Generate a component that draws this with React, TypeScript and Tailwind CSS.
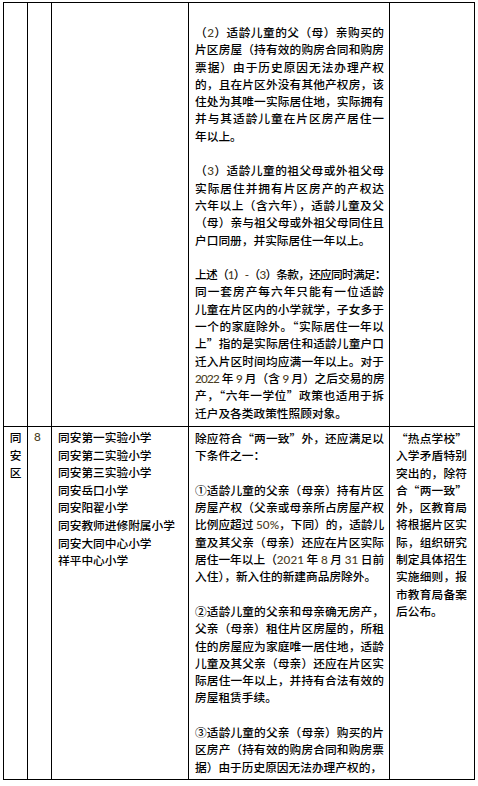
import React from "react";

const num = "font-['Lato'] text-[#4a3d24]";

// 数字用西文字体显示
function fmt(s: string) {
  return s.split(/([0-9%\-]+)/).map((part, i) =>
    /^[0-9%\-]+$/.test(part) ? (
      <span key={i} className={num}>
        {part}
      </span>
    ) : (
      <React.Fragment key={i}>{part}</React.Fragment>
    )
  );
}

// 每行单独写出，行末对齐；以 ! 开头的行字距收紧
function Lines({ rows }: { rows: string[] }) {
  return (
    <>
      {rows.map((r, i) => {
        if (r === "") return <div key={i} className="h-[17.3px]" />;
        const tight = r.startsWith("!");
        const text = tight ? r.slice(1) : r;
        const last = i === rows.length - 1 || rows[i + 1] === "";
        return (
          <div
            key={i}
            className={
              (last
                ? "h-[17.3px] leading-[17.3px] whitespace-nowrap"
                : "h-[17.3px] leading-[17.3px] whitespace-nowrap text-justify [text-align-last:justify]") +
              (tight ? " tracking-[-0.75px]" : "")
            }
          >
            {fmt(text)}
          </div>
        );
      })}
    </>
  );
}

const row1 = [
  "（2）适龄儿童的父（母）亲购买的",
  "片区房屋（持有效的购房合同和购房",
  "票据）由于历史原因无法办理产权",
  "的，且在片区外没有其他产权房，该",
  "住处为其唯一实际居住地，实际拥有",
  "并与其适龄儿童在片区房产居住一",
  "年以上。",
  "",
  "（3）适龄儿童的祖父母或外祖父母",
  "实际居住并拥有片区房产的产权达",
  "六年以上（含六年），适龄儿童及父",
  "（母）亲与祖父母或外祖父母同住且",
  "户口同册，并实际居住一年以上。",
  "",
  "!上述（1）-（3）条款，还应同时满足：",
  "同一套房产每六年只能有一位适龄",
  "儿童在片区内的小学就学，子女多于",
  "一个的家庭除外。“实际居住一年以",
  "上”指的是实际居住和适龄儿童户口",
  "迁入片区时间均应满一年以上。对于",
  "!2022 年 9 月（含 9 月）之后交易的房",
  "产，“六年一学位”政策也适用于拆",
  "迁户及各类政策性照顾对象。",
];

const row2 = [
  "除应符合“两一致”外，还应满足以",
  "下条件之一：",
  "",
  "①适龄儿童的父亲（母亲）持有片区",
  "房屋产权（父亲或母亲所占房屋产权",
  "比例应超过 50%，下同）的，适龄儿",
  "童及其父亲（母亲）还应在片区实际",
  "居住一年以上（2021 年 8 月 31 日前",
  "入住），新入住的新建商品房除外。",
  "",
  "②适龄儿童的父亲和母亲确无房产，",
  "父亲（母亲）租住片区房屋的，所租",
  "住的房屋应为家庭唯一居住地，适龄",
  "儿童及其父亲（母亲）还应在片区实",
  "际居住一年以上，并持有合法有效的",
  "房屋租赁手续。",
  "",
  "③适龄儿童的父亲（母亲）购买的片",
  "区房产（持有效的购房合同和购房票",
  "据）由于历史原因无法办理产权的，",
];

const schools = [
  "同安第一实验小学",
  "同安第二实验小学",
  "同安第三实验小学",
  "同安岳口小学",
  "同安阳翟小学",
  "同安教师进修附属小学",
  "同安大同中心小学",
  "祥平中心小学",
];

const note = [
  "“热点学校”",
  "入学矛盾特别",
  "突出的，除符",
  "合“两一致”",
  "外，区教育局",
  "将根据片区实",
  "际，组织研究",
  "制定具体招生",
  "实施细则，报",
  "市教育局备案",
  "后公布。",
];

export default function App() {
  return (
    <div className="w-[478px] h-[786px] bg-white pt-[2px] pl-[3px] font-['Noto_Sans_CJK_SC',sans-serif] font-medium text-[11.7px] text-black">
      <table className="w-[471px] table-fixed border-collapse">
        <colgroup>
          <col className="w-[24px]" />
          <col className="w-[24px]" />
          <col className="w-[137px]" />
          <col className="w-[201px]" />
          <col className="w-[85px]" />
        </colgroup>
        <tbody>
          <tr>
            <td className="h-[424px] border border-black" />
            <td className="border border-black" />
            <td className="border border-black" />
            <td className="border border-black align-top pt-[20px] pl-[6px] pr-[5px]">
              <Lines rows={row1} />
            </td>
            <td className="border border-black" />
          </tr>
          <tr>
            <td className="h-[353px] border border-black align-top pt-[1px] text-center">
              <div className="leading-[17.6px]">同</div>
              <div className="leading-[17.6px]">安</div>
              <div className="leading-[17.6px]">区</div>
            </td>
            <td className="border border-black align-top pt-[1px] pl-[6px]">
              <div className={"leading-[17.6px] " + num}>8</div>
            </td>
            <td className="border border-black align-top pt-[1px] pl-[6px]">
              {schools.map((s) => (
                <div key={s} className="leading-[17.6px] whitespace-nowrap">
                  {s}
                </div>
              ))}
            </td>
            <td className="border border-black align-top pt-[2px] pl-[6px] pr-[5px]">
              <Lines rows={row2} />
            </td>
            <td className="border border-black align-top pt-[2px] pl-[6px] pr-[7px]">
              <Lines rows={note} />
            </td>
          </tr>
        </tbody>
      </table>
    </div>
  );
}
